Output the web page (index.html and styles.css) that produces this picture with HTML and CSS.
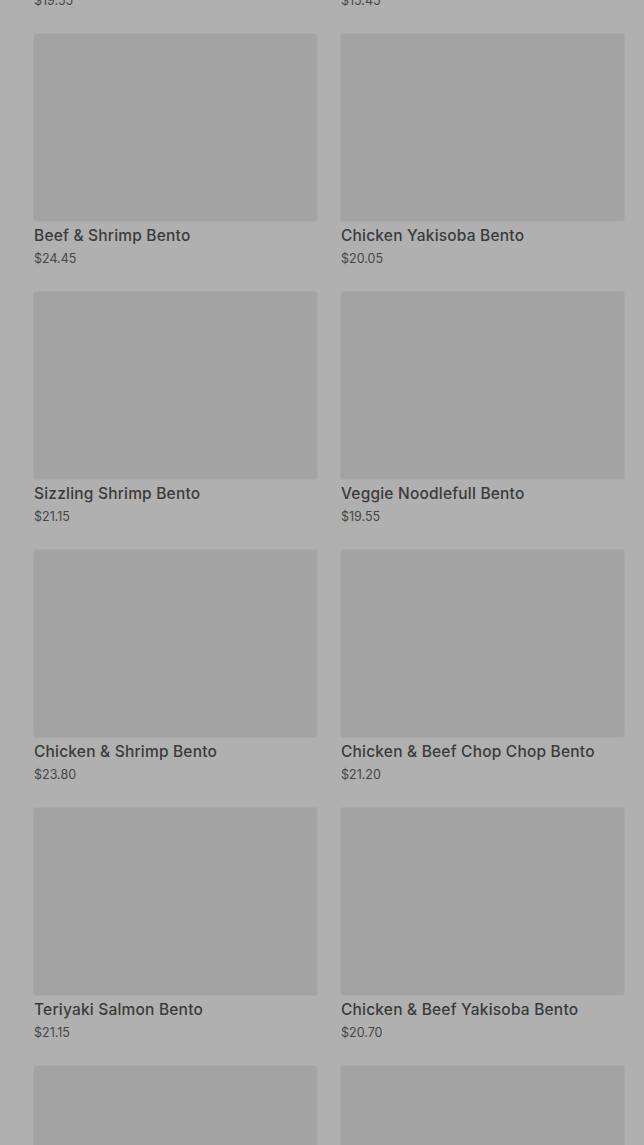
FILE: index.html
```html
<!DOCTYPE html>
<html>
<head>
<meta charset="utf-8">
<link rel="stylesheet" href="styles.css">
</head>
<body>
<div class="grid">
  <div class="card"><div class="img"></div><div class="info"><div class="title">Shrimp Bento</div><div class="price">$19.55</div></div></div>
  <div class="card"><div class="img"></div><div class="info"><div class="title">Chicken Bento</div><div class="price">$15.45</div></div></div>
  <div class="card"><div class="img"></div><div class="info"><div class="title">Beef &amp; Shrimp Bento</div><div class="price">$24.45</div></div></div>
  <div class="card"><div class="img"></div><div class="info"><div class="title">Chicken Yakisoba Bento</div><div class="price">$20.05</div></div></div>
  <div class="card"><div class="img"></div><div class="info"><div class="title">Sizzling Shrimp Bento</div><div class="price">$21.15</div></div></div>
  <div class="card"><div class="img"></div><div class="info"><div class="title">Veggie Noodlefull Bento</div><div class="price">$19.55</div></div></div>
  <div class="card"><div class="img"></div><div class="info"><div class="title">Chicken &amp; Shrimp Bento</div><div class="price">$23.80</div></div></div>
  <div class="card"><div class="img"></div><div class="info"><div class="title">Chicken &amp; Beef Chop Chop Bento</div><div class="price">$21.20</div></div></div>
  <div class="card"><div class="img"></div><div class="info"><div class="title">Teriyaki Salmon Bento</div><div class="price">$21.15</div></div></div>
  <div class="card"><div class="img"></div><div class="info"><div class="title">Chicken &amp; Beef Yakisoba Bento</div><div class="price">$20.70</div></div></div>
  <div class="card"><div class="img"></div><div class="info"><div class="title">Salmon Bento</div><div class="price">$22.35</div></div></div>
  <div class="card"><div class="img"></div><div class="info"><div class="title">Veggie Bento</div><div class="price">$17.15</div></div></div>
</div>
</body>
</html>
```
FILE: styles.css
```css
html, body {
  margin: 0;
  padding: 0;
  background: #b0b0b0;
  height: 1145px;
  overflow: hidden;
}
.grid {
  display: grid;
  grid-template-columns: 283px 283px;
  column-gap: 24px;
  row-gap: 25px;
  padding: 0 20px 0 34px;
  margin-top: -224px;
  font-family: Inter, "Noto Sans", sans-serif;
}
.card {
  display: flex;
  flex-direction: column;
}
.img {
  height: 187px;
  background: #a3a3a3;
  border-radius: 3px;
  box-shadow: 0 -1px 0 #aaaaaa, 0 0 0 1px #a9a9a9;
}
.info {
  padding-top: 5px;
}
.title {
  font-size: 15.5px;
  font-weight: 500;
  line-height: 20px;
  color: #3b3b3b;
  letter-spacing: 0.2px;
}
.price {
  margin-top: 5px;
  font-size: 12.5px;
  line-height: 16px;
  color: #464646;
}
```
